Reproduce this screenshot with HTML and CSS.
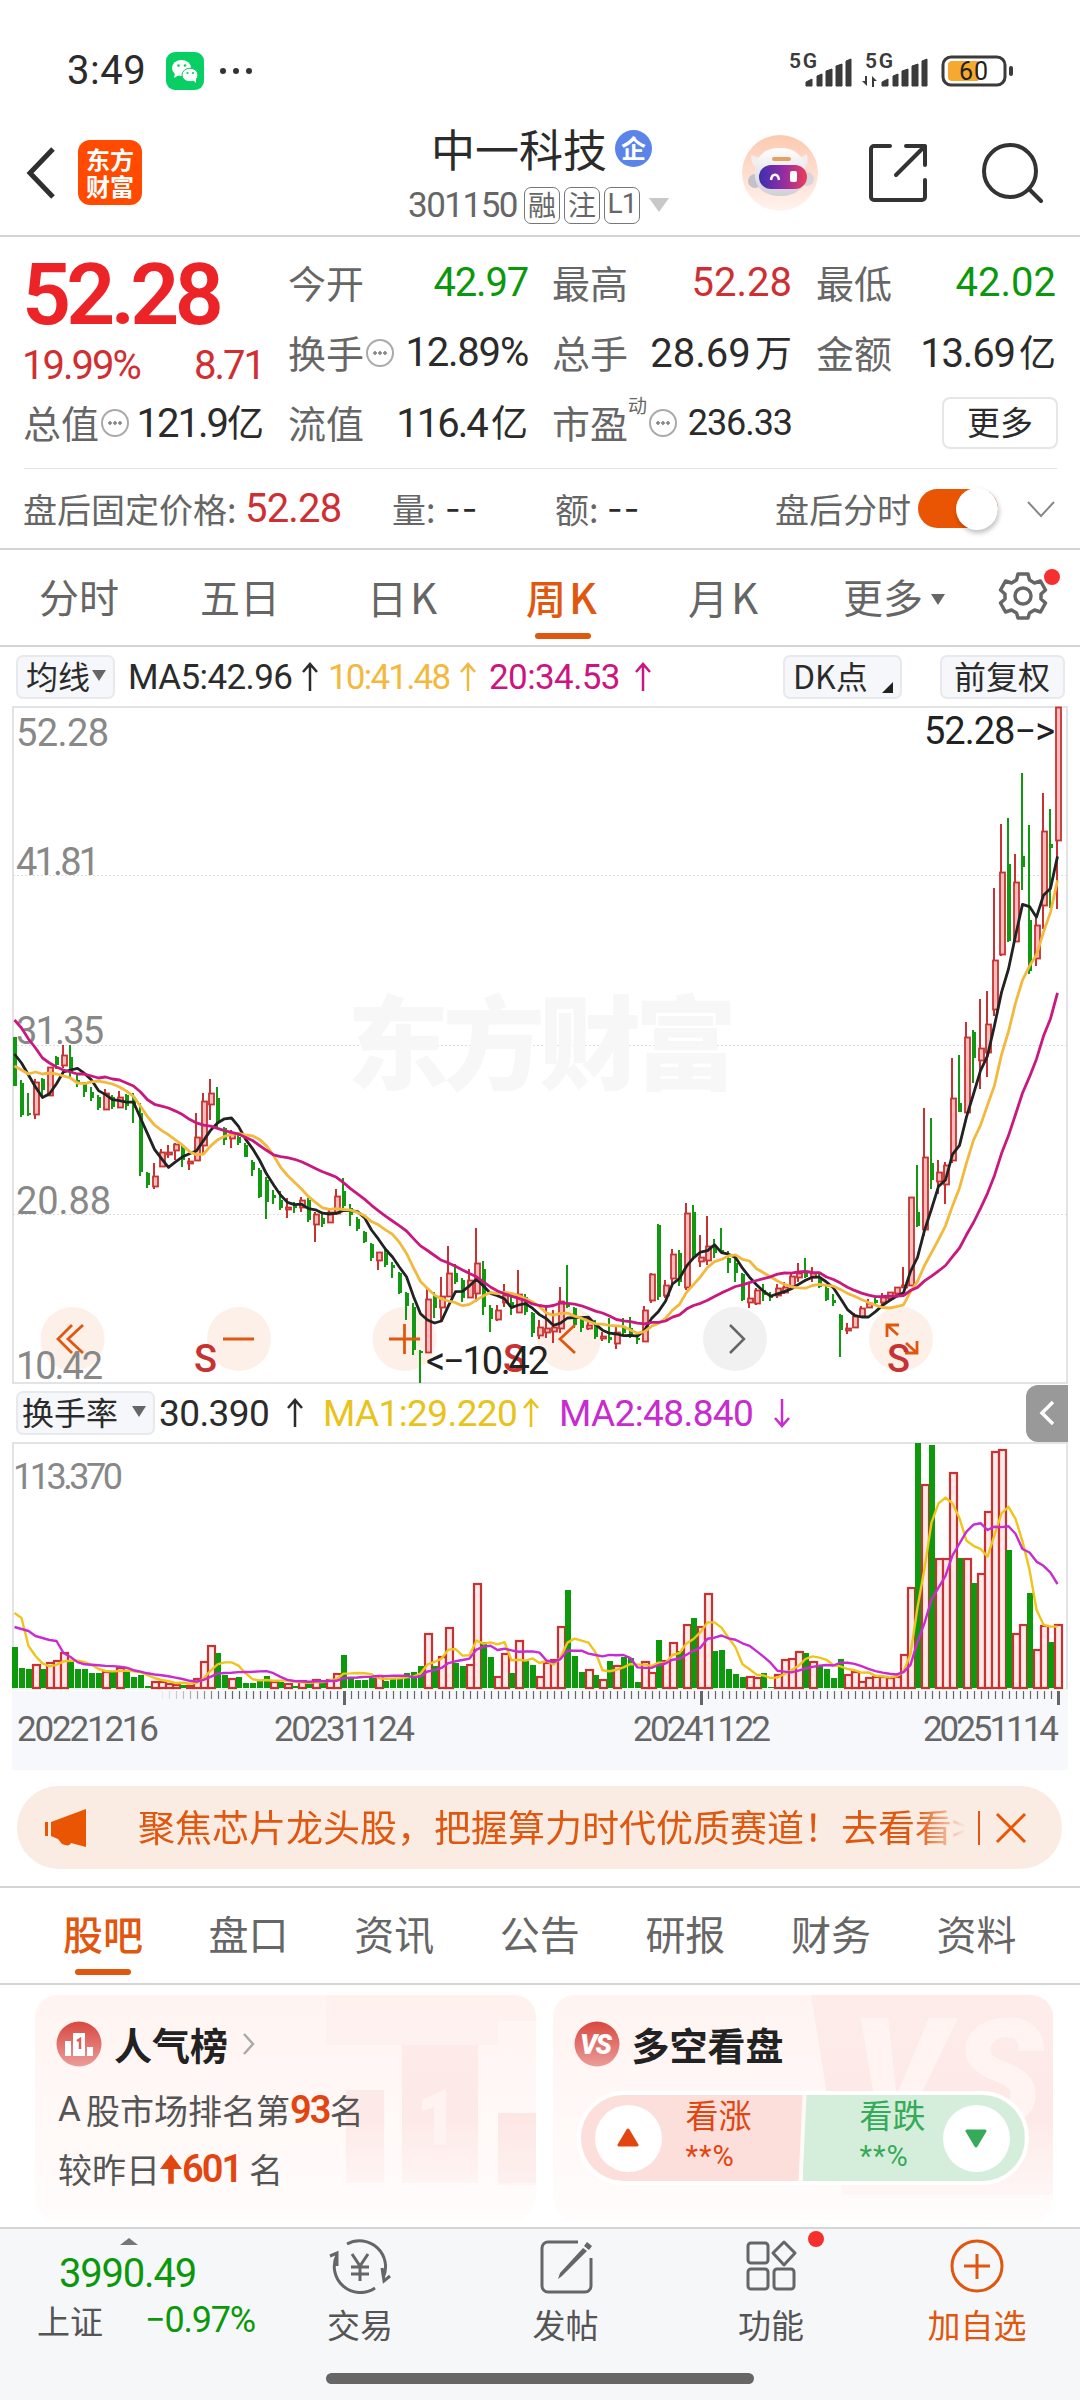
FILE: index.html
```html
<!DOCTYPE html>
<html lang="zh-CN">
<head>
    <meta charset="UTF-8">
    <meta name="viewport" content="width=device-width, initial-scale=1.0">
    <title>中一科技 301150</title>
    <link rel="stylesheet" href="styles.css">
</head>
<body>
    <div class="status-bar">
        <span class="time">3:49</span>
        <svg class="wechat" width="38" height="38" viewBox="0 0 38 38">
            <rect width="38" height="38" rx="9" fill="#07cf63"/>
            <ellipse cx="15.5" cy="16" rx="9.5" ry="8" fill="#fff"/>
            <path d="M9 21l-1 5 5-3z" fill="#fff"/>
            <ellipse cx="24" cy="23" rx="8" ry="6.8" fill="#fff" stroke="#07cf63"/>
            <path d="M27 28l3 3v-5z" fill="#fff"/>
            <g fill="#07cf63"><circle cx="12.5" cy="13.5" r="1.3"/><circle cx="19" cy="13.5" r="1.3"/><circle cx="21.5" cy="21" r="1.1"/><circle cx="27" cy="21" r="1.1"/></g>
        </svg>
        <svg class="dots" width="34" height="8" viewBox="0 0 34 8" fill="#333"><circle cx="4" cy="4" r="3"/><circle cx="17" cy="4" r="3"/><circle cx="30" cy="4" r="3"/></svg>
        <svg class="signals" width="224" height="42" viewBox="0 -4 224 42">
            <g fill="#3b3b3b" font-family="Roboto, sans-serif" font-size="21" font-weight="600">
                <text x="0" y="14" textLength="28">5G</text>
                <text x="76" y="14" textLength="28">5G</text>
                <path id="bars" d="M17 32v-4l6-3v7zM28 32V22l5-2v12zM37 32V17l6-2v17zM47 32V12l6-2v22zM57 32V7l5-2v27z" stroke="#3b3b3b" stroke-width="1" stroke-linejoin="round"/>
                <use href="#bars" x="76"/>
                <path d="M78 22v10l-5-5h3v-5zM83 33V22l5 5h-3v6z"/>
            </g>
            <rect x="154" y="3" width="62" height="28" rx="8" fill="none" stroke="#3b3b3b" stroke-width="3"/>
            <path d="M163 7h26v20h-26a4 4 0 0 1-4-4V11a4 4 0 0 1 4-4z" fill="#f6a92f"/>
            <rect x="220" y="12" width="4" height="10" rx="2" fill="#3b3b3b"/>
            <text x="170" y="26" font-family="Roboto, sans-serif" font-size="25" fill="#222" textLength="29">60</text>
        </svg>
    </div>

    <header class="header">
        <svg class="back" width="32" height="54" viewBox="0 0 32 54" fill="none" stroke="#2f2f2f" stroke-width="5"><path d="M28 3L5 27l23 24"/></svg>
        <div class="logo"><span>东方</span><span>财富</span></div>
        <div class="stock">
            <div class="stock-name">中一科技<span class="ent">企</span></div>
            <div class="stock-code"><span class="num">301150</span><i>融</i><i>注</i><i class="num">L1</i><b class="down"></b></div>
        </div>
        <svg class="robot" width="78" height="78" viewBox="0 0 78 78">
            <defs>
                <linearGradient id="halo" x1="0" y1="0" x2="0" y2="1"><stop offset="0" stop-color="#fdc9b0"/><stop offset="1" stop-color="#fff3ef"/></linearGradient>
                <linearGradient id="visor"><stop offset="0" stop-color="#3a2fb0"/><stop offset=".55" stop-color="#9a2da0"/><stop offset="1" stop-color="#ee3f55"/></linearGradient>
                <linearGradient id="shell" x1="0" y1="0" x2="0" y2="1"><stop offset="0" stop-color="#fff"/><stop offset="1" stop-color="#cfcfd6"/></linearGradient>
            </defs>
            <circle cx="39" cy="39" r="38" fill="url(#halo)"/>
            <circle cx="14" cy="47" r="7" fill="#c4c2c8"/><circle cx="66" cy="45" r="7" fill="#d8d6dc"/>
            <path d="M10 21l9 3-5 9c-3-3-4-7-4-12zM66 20l-8 4 7 8c2-3 2-7 1-12z" fill="#f1eef0"/>
            <path d="M39 14c15 0 23 7 26 22 2 16-9 26-26 26S12 52 14 36c2-15 10-22 25-22z" fill="url(#shell)"/>
            <rect x="31" y="23" width="19" height="4" rx="2" fill="#e5a064"/>
            <rect x="18" y="31" width="48" height="24" rx="12" fill="url(#visor)"/>
            <path d="M30 46c1-7 7-7 8 0" fill="none" stroke="#fff" stroke-width="2.5"/>
            <rect x="49" y="37" width="7" height="11" rx="2" fill="#fff"/>
        </svg>
        <svg class="share" width="60" height="60" viewBox="0 0 60 60" fill="none" stroke="#333" stroke-width="4" stroke-linecap="round" stroke-linejoin="round"><path d="M22 3H6a3 3 0 0 0-3 3v48a3 3 0 0 0 3 3h48a3 3 0 0 0 3-3V37M38 3h19v19M57 3L28 32"/></svg>
        <svg class="search" width="62" height="62" viewBox="0 0 62 62" fill="none" stroke="#333" stroke-width="4" stroke-linecap="round"><circle cx="29" cy="29" r="26"/><path d="M48 47l12 12"/></svg>
    </header>

    <section class="quote">
        <div class="quote-left">
            <div class="price">52.28</div>
            <div class="change num"><span>19.99%</span><span>8.71</span></div>
            <div class="cell"><span>总值</span><b class="tip"></b><em><span class="num tight">121.9</span>亿</em></div>
        </div>
        <div class="quote-grid">
            <div class="cell"><span>今开</span><em class="num green">42.97</em></div>
            <div class="cell"><span>最高</span><em class="num red wide">52.28</em></div>
            <div class="cell"><span>最低</span><em class="num green wide">42.02</em></div>
            <div class="cell"><span>换手</span><b class="tip"></b><em class="num">12.89%</em></div>
            <div class="cell"><span>总手</span><em><span class="num wide">28.69</span> 万</em></div>
            <div class="cell"><span>金额</span><em><span class="num">13.69</span> 亿</em></div>
            <div class="cell"><span>流值</span><em><span class="num tight">116.4</span> 亿</em></div>
            <div class="cell"><span>市盈</span><sup>动</sup><b class="tip"></b><em class="num pe">236.33</em></div>
            <div class="cell"><div class="more-btn">更多</div></div>
        </div>
    </section>

    <section class="after-hours">
        <span>盘后固定价格:</span><span class="num red after-price">52.28</span>
        <span>量:</span><span class="dash">--</span>
        <span>额:</span><span class="dash">--</span>
        <span>盘后分时</span>
        <div class="toggle"></div>
        <svg width="28" height="18" viewBox="0 0 28 18" fill="none" stroke="#888" stroke-width="2"><path d="M1 2l13 14L27 2"/></svg>
    </section>

    <nav class="period-tabs">
        <span>分时</span><span>五日</span><span>日<b>K</b></span><span class="active">周<b>K</b></span><span>月<b>K</b></span><span>更多<b class="down small"></b></span>
        <div class="gear">
            <svg width="50" height="50" viewBox="0 0 50 50" fill="none" stroke="#666" stroke-width="3.5" stroke-linejoin="round"><path d="M20 3h10l1.500 6 5 3 6-2 5 9-4.500 4v5l4.500 4-5 9-6-2-5 3-1.500 5H20l-1.500-5-5-3-6 2-5-9L7 28v-5l-4.500-4 5-9 6 2 5-3z"/><circle cx="25" cy="25" r="8"/></svg>
            <i class="red-dot"></i>
        </div>
    </nav>

    <section class="ma-row">
        <div class="chip">均线<b class="down small"></b></div>
        <span class="num">MA5:42.96</span><svg class="arrow"><use href="#up"/></svg>
        <span class="num orange">10:41.48</span><svg class="arrow orange"><use href="#up"/></svg>
        <span class="num magenta">20:34.53</span><svg class="arrow magenta"><use href="#up"/></svg>
        <div class="chip dk">DK点<b class="corner"></b></div>
        <div class="chip">前复权</div>
    </section>

    <svg class="k-chart" width="1056" height="678" viewBox="0 0 1056 678">
        <defs>
            <symbol id="up" viewBox="0 0 18 30"><path d="M9 29V2M2 10l7-8 7 8" fill="none" stroke="currentColor" stroke-width="2.5"/></symbol>
            <symbol id="down" viewBox="0 0 18 30"><path d="M9 1v27M2 20l7 8 7-8" fill="none" stroke="currentColor" stroke-width="2.5"/></symbol>
        </defs>
        <path d="M1 677V1h1054v676z" fill="none" stroke="#e1e3e4" stroke-width="2"/>
        <path d="M1 169.5h1054M1 339.500h1054M1 508.500h1054" stroke="#ddd" stroke-width="1" stroke-dasharray="2 2"/>
        <text class="watermark" x="335" y="376" textLength="390">东方财富</text>
        <g fill="#fdf0e9"><circle cx="60.5" cy="633" r="32"/><circle cx="227" cy="633" r="32"/><circle cx="392.5" cy="633" r="32"/><circle cx="557" cy="633" r="32"/><circle cx="889" cy="633" r="32"/></g>
        <circle cx="723" cy="633" r="32" fill="#f1f1f1"/>
        <g class="axis">
            <text x="4" y="40" textLength="93">52.28</text>
            <text x="4" y="169" textLength="84">41.81</text>
            <text x="4" y="338" textLength="88">31.35</text>
            <text x="4" y="508" textLength="95">20.88</text>
            <text x="4" y="673" textLength="87">10.42</text>
        </g>
        <g id="candles"></g>
        <g fill="none" stroke="#e0570f" stroke-width="2.8">
            <path d="M60 619l-14 14 14 14M71 619l-15 14 15 14"/>
            <path d="M211 633h31M377 633h31M392.500 618v30"/>
            <path d="M563 619l-15 14 15 14"/>
            <path d="M887 619h-12v12M875 619l11 10M893 647h12v-12M905 647l-11-10"/>
        </g>
        <path d="M718 619l14 14-14 14" fill="none" stroke="#666" stroke-width="2.5"/>
        <g class="sell"><text x="182" y="666">S</text><text x="491" y="666">S</text><text x="875" y="666">S</text></g>
        <text class="mark" x="912" y="38" textLength="131">52.28−&gt;</text>
        <text class="mark" x="414" y="668" textLength="123">&lt;−10.42</text>
    </svg>

    <section class="vol-row">
        <div class="chip">换手率<b class="down small"></b></div>
        <span class="num">30.390</span><svg class="arrow"><use href="#up"/></svg>
        <span class="num yellow">MA1:29.220</span><svg class="arrow yellow"><use href="#up"/></svg>
        <span class="num purple">MA2:48.840</span><svg class="arrow purple"><use href="#down"/></svg>
        <div class="drawer"><svg width="16" height="26" viewBox="0 0 16 26" fill="none" stroke="#fff" stroke-width="3.5"><path d="M14 2L3 13l11 11"/></svg></div>
    </section>

    <svg class="vol-chart" width="1056" height="328" viewBox="0 0 1056 328">
        <rect y="249" width="1056" height="79" fill="#f7f8fb"/>
        <path d="M1 247V1h1054v246" fill="none" stroke="#e1e3e4" stroke-width="2"/>
        <path d="M0 247h1056" stroke="#d5f0da" stroke-width="1"/>
        <g class="axis small-axis"><text x="1" y="47" textLength="110">113.370</text></g>
        <g id="volumes"></g>
        <g id="ticks"></g>
        <g class="dates">
            <text x="5" y="299" textLength="142">20221216</text>
            <text x="262" y="299" textLength="141">20231124</text>
            <text x="621" y="299" textLength="138">20241122</text>
            <text x="911" y="299" textLength="136">20251114</text>
        </g>
    </svg>

    <div class="banner">
        <svg width="44" height="38" viewBox="0 0 44 38" fill="#ea5504"><path d="M1 13h3v14H1zM7 13L42 0v38l-15-4c-2 4-5 2-9 1l-4-5-7-3z"/></svg>
        <p>聚焦芯片龙头股，把握算力时代优质赛道！去看看&gt;</p>
        <i></i>
        <svg width="32" height="32" viewBox="0 0 32 32" stroke="#ea5504" stroke-width="3"><path d="M2 2l28 28M30 2L2 30"/></svg>
    </div>

    <nav class="info-tabs">
        <span class="active">股吧</span><span>盘口</span><span>资讯</span><span>公告</span><span>研报</span><span>财务</span><span>资料</span>
    </nav>

    <section class="cards">
        <div class="card">
            <svg class="card-bg" width="260" height="225" viewBox="0 0 260 225">
                <defs><linearGradient id="fade" gradientUnits="userSpaceOnUse" x1="0" y1="0" x2="0" y2="200"><stop offset="0" stop-color="#fbdedb" stop-opacity=".35"/><stop offset=".6" stop-color="#fbdcda" stop-opacity=".55"/><stop offset="1" stop-color="#fbe3e1" stop-opacity=".2"/></linearGradient></defs>
                <path d="M50 0h210v190h-38v-72h38V26H222v24H50z" fill="#fdeae7" opacity=".35"/>
                <path d="M70 95h38v93H70zM126 50h76v138h-76zM222 118h38v70h-38z" fill="url(#fade)"/>
                <path d="M146 105l24-11v56h-12v-38l-12 4z" fill="#fff3f1"/>
            </svg>
            <h3><svg width="46" height="46" viewBox="0 0 46 46"><defs><linearGradient id="badge" x1="0" y1="0" x2="0" y2="1"><stop offset="0" stop-color="#d94741"/><stop offset="1" stop-color="#eb9d99"/></linearGradient></defs><circle cx="23" cy="23" r="22.5" fill="url(#badge)"/><path d="M9 20h6v15H9zM17 12h12v23H17zM31 26h6v9h-6z" fill="#fff"/><path d="M21 20l3-2v10" fill="none" stroke="#d85f5a" stroke-width="2.5"/></svg>人气榜<svg class="more" width="14" height="24" viewBox="0 0 14 24" fill="none" stroke="#aaa" stroke-width="2.5"><path d="M2 2l9 10-9 10"/></svg></h3>
            <p><span class="num">A </span>股市场排名第<b class="num">93</b>名</p>
            <p>较昨日<svg width="22" height="32" viewBox="0 0 24 32" fill="#e2450f"><path d="M12 0l12 16h-9v16H9V16H0z"/></svg><b class="num">601</b> 名</p>
        </div>
        <div class="card">
            <svg class="card-bg" width="260" height="225" viewBox="0 0 260 225">
                <path d="M18 0h242v200H50z" fill="url(#fade)"/>
                <text x="58" y="130" class="vs" textLength="192">VS</text>
            </svg>
            <h3><svg width="46" height="46" viewBox="0 0 46 46"><circle cx="23" cy="23" r="22.5" fill="url(#badge)"/><text x="6" y="33" class="vs-icon" textLength="32">VS</text></svg>多空看盘</h3>
            <div class="vote">
                <div class="rise"><i><svg width="24" height="20" viewBox="0 0 24 20"><path d="M12 2l9 15H3z" fill="#e2450f" stroke="#e2450f" stroke-width="3" stroke-linejoin="round"/></svg></i><span>看涨<small>**%</small></span></div>
                <div class="fall"><span>看跌<small>**%</small></span><i><svg width="24" height="20" viewBox="0 0 24 20"><path d="M12 18L3 3h18z" fill="#35ab59" stroke="#35ab59" stroke-width="3" stroke-linejoin="round"/></svg></i></div>
            </div>
        </div>
    </section>

    <footer class="bottom-nav">
        <div class="index">
            <b class="up"></b>
            <div class="num green">3990.49</div>
            <div class="index-row"><span>上证</span><span class="num green">−0.97%</span></div>
        </div>
        <div class="nav-item">
            <svg width="62" height="56" viewBox="0 0 62 56" fill="none" stroke="#666" stroke-width="3"><path d="M18 6a26 26 0 0 1 36 34M46 50A26 26 0 0 1 8 17M1 18l7-3v13M61 38l-6 5-2-13M23 16l8 12 8-12M31 28v15M22 29h18M22 36h18"/></svg>
            <span>交易</span>
        </div>
        <div class="nav-item">
            <svg width="54" height="56" viewBox="0 0 54 56" fill="none" stroke="#666" stroke-width="3"><path d="M39 4H9a6 6 0 0 0-6 6v38a6 6 0 0 0 6 6h37a6 6 0 0 0 6-6V20"/><path d="M44 10l4 3-25 25-4 3 2-6zM48 4l5 4-3 4-5-4z" fill="#666" stroke="none"/></svg>
            <span>发帖</span>
        </div>
        <div class="nav-item">
            <svg width="52" height="52" viewBox="0 0 52 52" fill="none" stroke="#666" stroke-width="3"><rect x="3" y="3" width="20" height="20" rx="3"/><path d="M39 2l11 11-11 12-11-12z" stroke-linejoin="round"/><rect x="3" y="29" width="20" height="20" rx="3"/><rect x="29" y="29" width="20" height="20" rx="3"/></svg>
            <span>功能</span>
            <i class="red-dot"></i>
        </div>
        <div class="nav-item add">
            <svg width="56" height="56" viewBox="0 0 56 56" fill="none" stroke="#e0570f" stroke-width="3"><circle cx="28" cy="28" r="25"/><path d="M28 16v25M15 28h26"/></svg>
            <span>加自选</span>
        </div>
        <div class="home-bar"></div>
    </footer>

    <script src="chart.js"></script>
</body>
</html>
```
FILE: styles.css
```css
:root {
    --orange: #e0570f;
    --red: #cf2f33;
    --green: #0c980c;
    --text: #2b2b2b;
    --gray: #666;
    --line: #d5d5d5;
}

* {
    box-sizing: border-box;
}

body {
    width: 1080px;
    height: 2400px;
    margin: 0;
    overflow: hidden;
    background: #fff;
    color: var(--text);
    font-family: "Noto Sans CJK SC", sans-serif;
    font-size: 38px;
    line-height: 1;
}

i, em {
    font-style: normal;
}

svg {
    flex: none;
}

.num {
    font-family: Roboto, "Noto Sans CJK SC", sans-serif;
    letter-spacing: -0.03em;
}

.num.wide { letter-spacing: 0; }
.num.tight { letter-spacing: -0.05em; }

.green { color: var(--green) !important; }
.red { color: var(--red) !important; }
.orange { color: #f3b93e; }
.magenta { color: #cc1580; }
.yellow { color: #e8c31c; }
.purple { color: #c82bd0; }

.down {
    display: inline-block;
    border: 10px solid transparent;
    border-top: 14px solid #c8c8c8;
    border-bottom: 0;
}

.down.small {
    border-width: 11px 7px 0;
    border-top-color: var(--gray);
}

.red-dot {
    position: absolute;
    width: 16px;
    height: 16px;
    border-radius: 50%;
    background: #f5302e;
}

/* 状态栏 */
.status-bar {
    display: flex;
    align-items: center;
    height: 105px;
    padding: 36px 67px 0 67px;
}

.time {
    width: 99px;
    font-family: Roboto, sans-serif;
    font-size: 40px;
    letter-spacing: 0.5px;
}

.dots {
    margin-left: 15px;
}

.signals {
    margin-left: auto;
}

/* 标题栏 */
.header {
    display: flex;
    align-items: center;
    height: 132px;
    padding: 5px 37px 0 25px;
    border-bottom: 2px solid var(--line);
}

.logo {
    display: flex;
    flex-direction: column;
    justify-content: center;
    width: 64px;
    height: 65px;
    margin-left: 21px;
    padding-bottom: 2px;
    border-radius: 12px;
    background: #ff4a00;
    color: #fff;
    font-size: 24px;
    font-weight: 700;
    line-height: 27px;
    text-align: center;
}

.stock {
    width: 262px;
    margin-left: 266px;
    padding-top: 12px;
}

.stock-name {
    display: flex;
    align-items: center;
    padding-left: 23px;
    height: 50px;
    font-size: 44px;
}

.ent {
    width: 37px;
    height: 37px;
    margin: 2px 0 0 8px;
    border-radius: 50%;
    background: #5b84e8;
    color: #fff;
    font-size: 25px;
    font-weight: 700;
    line-height: 35px;
    text-align: center;
}

.stock-code {
    display: flex;
    align-items: center;
    height: 62px;
    padding-top: 3px;
    color: var(--gray);
    font-size: 35px;
}

.stock-code .num:first-child {
    width: 116px;
    letter-spacing: -1.5px;
}

.stock-code i {
    width: 36px;
    height: 37px;
    margin-right: 4px;
    border: 1.5px solid #777;
    border-radius: 7px;
    font-size: 28px;
    line-height: 32px;
    text-align: center;
}

.stock-code .down {
    margin-left: 5px;
}

.robot {
    margin-left: 71px;
}

.share {
    margin-left: 49px;
}

.search {
    margin-left: auto;
}

/* 行情 */
.quote {
    display: flex;
    gap: 25px;
    height: 232px;
    margin: 0 23px 0 24px;
    padding-top: 11px;
    border-bottom: 1px solid #e4e4e4;
}

.quote-left {
    width: 240px;
}

.price {
    height: 93px;
    margin-left: -2px;
    color: #ec2427;
    font-family: Roboto, sans-serif;
    font-size: 86px;
    font-weight: 600;
    line-height: 93px;
    letter-spacing: -4.8px;
}

.change {
    display: flex;
    justify-content: space-between;
    align-items: center;
    height: 49px;
    margin: 0 0 -2px -2px;
    color: var(--red);
    font-size: 40px;
    letter-spacing: -2px;
}

.quote-grid {
    display: grid;
    grid-template-columns: repeat(3, 239px);
    grid-auto-rows: 70px;
    column-gap: 25px;
}

.cell {
    display: flex;
    align-items: center;
    height: 70px;
    color: var(--gray);
    white-space: nowrap;
}

.cell > span {
    margin: -2px 0 0 -1px;
}

.cell em {
    margin-left: auto;
    color: var(--text);
    font-size: 37px;
    word-spacing: -4px;
}

.cell em.num,
.cell em .num {
    font-size: 40px;
}

.cell em.pe {
    font-size: 36px;
}

.cell sup {
    align-self: flex-start;
    margin-top: 7px;
    font-size: 19px;
    line-height: 20px;
}

.tip {
    width: 28px;
    height: 28px;
    margin-left: 2px;
    border: 2px solid #aaa;
    border-radius: 50%;
    background: radial-gradient(circle, #888 1.5px, transparent 2px) center / 6px 6px no-repeat,
        radial-gradient(circle, #888 1.5px, transparent 2px) 4px center / 6px 6px no-repeat,
        radial-gradient(circle, #888 1.5px, transparent 2px) 14px center / 6px 6px no-repeat;
}

.more-btn {
    width: 116px;
    height: 52px;
    margin: 0 -2px 0 auto;
    border: 2px solid #e6e6e6;
    border-radius: 8px;
    color: var(--text);
    font-size: 33px;
    line-height: 45px;
    text-align: center;
}

.after-hours {
    display: grid;
    grid-template-columns: 222px 147px 53px 110px 52px 168px 143px 109px 28px;
    align-items: center;
    height: 81px;
    padding-left: 23px;
    border-bottom: 2px solid var(--line);
    color: var(--gray);
    font-size: 34px;
    white-space: nowrap;
}

.after-price {
    font-size: 40px;
    letter-spacing: -0.02em;
}

.dash {
    color: var(--text);
    font-family: Inter, sans-serif;
    letter-spacing: 1px;
}

.toggle {
    width: 80px;
    height: 39px;
    border-radius: 20px;
    background: #ea5504;
}

.toggle::after {
    content: "";
    display: block;
    width: 42px;
    height: 42px;
    margin: -1px 0 0 38px;
    border-radius: 50%;
    background: #fff;
    box-shadow: 1px 3px 5px rgba(0, 0, 0, 0.25);
}

/* 周期切换 */
.period-tabs {
    display: grid;
    grid-template-columns: 161px 167px 159px 162px 155px 155px 50px;
    align-items: center;
    height: 97px;
    padding: 0 0 3px 39px;
    border-bottom: 2px solid var(--line);
    color: var(--gray);
    font-size: 40px;
}

.period-tabs b:not(.down) {
    margin-left: 3px;
    font-size: 42px;
    font-weight: inherit;
}

.period-tabs .active,
.info-tabs .active {
    position: relative;
    color: var(--orange);
}

.period-tabs .active {
    font-weight: 500;
}

.active::after {
    content: "";
    position: absolute;
    bottom: -22px;
    left: 9px;
    width: 56px;
    height: 6px;
    border-radius: 3px;
    background: var(--orange);
}

.period-tabs .small {
    margin: 0 0 8px 8px;
}

.gear {
    position: relative;
    height: 50px;
}

.gear .red-dot {
    right: -12px;
    top: -2px;
}

.ma-row,
.vol-row {
    display: grid;
    align-items: center;
    height: 60px;
    font-size: 35px;
    white-space: nowrap;
}

.ma-row {
    grid-template-columns: 112px 173px 27px 131px 30px 145px 149px 157px 125px;
    padding-left: 16px;
}

.ma-row .num {
    letter-spacing: -0.6px;
}

.ma-row .orange.num {
    letter-spacing: -1.8px;
}

.chip {
    display: flex;
    align-items: center;
    justify-content: space-between;
    justify-self: start;
    height: 44px;
    padding: 0 7px 4px 8px;
    border: 2px solid #e8e9ec;
    border-radius: 7px;
    background: #f6f7fa;
    font-size: 32px;
}

.ma-row .chip:first-child {
    width: 99px;
}

.dk {
    width: 119px;
}

.corner {
    align-self: flex-end;
    border-left: 11px solid transparent;
    border-bottom: 11px solid #222;
}

.chip:last-child {
    width: 125px;
    padding-left: 12px;
}

.arrow {
    width: 18px;
    height: 30px;
}

/* 图表 */
.k-chart,
.vol-chart {
    display: block;
    margin-left: 12px;
}

.k-chart {
    margin-top: -1px;
}

.axis {
    fill: #888;
    font-family: Roboto, sans-serif;
    font-size: 38px;
}

.small-axis {
    font-size: 36px;
}

.watermark {
    fill: #f7f7f7;
    font-size: 102px;
    font-weight: 800;
}

.mark {
    fill: #222;
    font-family: Roboto, sans-serif;
    font-size: 38px;
}

.sell {
    fill: #c83232;
    font-family: Roboto, sans-serif;
    font-size: 38px;
    font-weight: 500;
}

.dates {
    fill: #666;
    font-family: Roboto, sans-serif;
    font-size: 35px;
}

.vol-row {
    grid-template-columns: 143px 127px 37px 199px 37px 214px 253px 42px;
    height: 58px;
    padding-left: 16px;
}

.vol-row .num {
    font-size: 37px;
    letter-spacing: -0.6px;
}

.vol-row .chip {
    width: 139px;
    padding-left: 4px;
}

.drawer {
    display: flex;
    align-items: center;
    justify-content: center;
    height: 57px;
    border-radius: 12px 0 0 12px;
    background: #999;
}

/* 公告条 */
.banner {
    display: flex;
    align-items: center;
    width: 1045px;
    height: 83px;
    margin: 16px 0 17px 17px;
    padding: 0 35px 0 27px;
    border-radius: 42px;
    background: #fbece3;
    color: var(--orange);
    font-size: 37px;
}

.banner p {
    width: 828px;
    margin: 0 0 3px 50px;
    overflow: hidden;
    line-height: 50px;
    white-space: nowrap;
    -webkit-mask-image: linear-gradient(90deg, #000 94%, transparent);
    mask-image: linear-gradient(90deg, #000 94%, transparent);
}

.banner i {
    width: 2px;
    height: 34px;
    margin: 0 15px 0 auto;
    background: var(--orange);
}

.info-tabs {
    display: grid;
    grid-template-columns: repeat(7, 145.6px);
    align-items: center;
    height: 99px;
    padding: 0 0 5px 63px;
    border-top: 2px solid var(--line);
    border-bottom: 2px solid var(--line);
    color: var(--gray);
    font-size: 40px;
}

.info-tabs .active {
    font-weight: 500;
}

.info-tabs .active::after {
    bottom: -22px;
    left: 12px;
}

/* 卡片 */
.cards {
    display: flex;
    gap: 17px;
    height: 242px;
    padding: 10px 27px 0 35px;
}

.card {
    position: relative;
    flex: 1;
    height: 225px;
    padding: 26px 23px;
    border-radius: 22px;
    background: linear-gradient(#fff4f2, #fffcfb);
    color: #555;
    font-size: 34px;
    overflow: hidden;
}

.card-bg {
    position: absolute;
    right: 0;
    top: 0;
}

.vs {
    fill: #fff4f2;
    font-family: Roboto, sans-serif;
    font-size: 150px;
    font-weight: 900;
    font-style: italic;
}

.vs-icon {
    fill: #fff;
    font-family: Roboto, sans-serif;
    font-size: 27px;
    font-weight: 900;
    font-style: italic;
}

.card h3 {
    position: relative;
    display: flex;
    align-items: center;
    height: 46px;
    margin: 0;
    color: #222;
    font-size: 38px;
    font-weight: 600;
}

.card h3 svg:first-child {
    margin: 0 12px 0 -2px;
}

.card .more {
    margin-left: 14px;
}

.card p {
    position: relative;
    display: flex;
    align-items: center;
    height: 59px;
    margin: 13px 0 -13px;
    white-space: pre;
}

.card p .num {
    font-size: 35px;
    letter-spacing: -0.05em;
}

.card p b {
    color: #e2450f;
    font-size: 38px !important;
    font-weight: 600;
}

.vote {
    position: relative;
    display: flex;
    width: 452px;
    height: 94px;
    margin: 24px 0 0 1px;
    border: 4px solid #fff;
    border-radius: 47px;
    overflow: hidden;
}

.rise,
.fall {
    display: flex;
    align-items: center;
    width: 225px;
}

.rise {
    padding-left: 14px;
    background: #fcdeda;
    color: #e2450f;
    clip-path: polygon(0 0, 100% 0, calc(100% - 4px) 100%, 0 100%);
}

.fall {
    justify-content: flex-end;
    padding-right: 15px;
    background: #d5eedb;
    color: #35ab59;
    clip-path: polygon(4px 0, 100% 0, 100% 100%, 0 100%);
}

.vote i {
    display: flex;
    align-items: center;
    justify-content: center;
    width: 67px;
    height: 67px;
    border-radius: 50%;
    background: #fff;
}

.vote span {
    margin: -7px 24px 0 24px;
    font-size: 33px;
}

.fall span {
    margin-right: 17px;
}

.vote small {
    display: block;
    margin-top: 10px;
    font-family: Roboto, sans-serif;
    font-size: 29px;
    line-height: 30px;
    letter-spacing: 1px;
}

/* 底部导航 */
.bottom-nav {
    position: relative;
    display: grid;
    grid-template-columns: 257px 206px 205px 206px 206px;
    height: 174px;
    border-top: 2px solid var(--line);
    background: #f6f7f9;
    color: #555;
    font-size: 33px;
}

.index {
    position: relative;
    padding: 24px 0 0 37px;
    white-space: nowrap;
}

.index > .num {
    padding-left: 22px;
    font-size: 40px;
    line-height: 42px;
}

.index-row {
    display: flex;
    align-items: center;
    gap: 42px;
    height: 50px;
}

.index-row .num {
    font-size: 36px;
    letter-spacing: -1.2px;
}

.up {
    position: absolute;
    left: 120px;
    top: 9px;
    border: 9px solid transparent;
    border-top: 0;
    border-bottom: 7px solid #777;
}

.nav-item {
    position: relative;
    display: flex;
    flex-direction: column;
    align-items: center;
    padding-top: 9px;
}

.nav-item svg {
    height: 56px;
}

.nav-item span {
    margin-top: 14px;
}

.nav-item .red-dot {
    left: 140px;
    top: 2px;
}

.add {
    color: var(--orange);
}

.home-bar {
    position: absolute;
    left: 326px;
    bottom: 17px;
    width: 428px;
    height: 11px;
    border-radius: 6px;
    background: #666;
}
```
FILE: chart.js
```js
const STEP = 7;

// 颜色, 最高, 实体上沿, 实体下沿, 最低
const candles = `
g331,331,380,380 g374,377,409,411 g387,407,409,410 r373,376,408,413 g372,373,384,391
r361,361,389,389 g350,351,359,363 r339,349,359,362 g339,351,367,371 g369,374,376,381
g376,377,386,391 g381,386,392,395 g389,391,402,404 r383,387,403,404 g389,391,401,403
r385,391,401,402 g388,389,400,404 g387,391,402,417 g397,407,466,470 g466,467,479,482
r457,470,480,483 r443,446,460,461 r439,446,447,452 r437,438,444,454 g439,442,454,461
r452,455,457,464 r407,431,454,455 r387,395,439,447 r373,387,398,414 g381,392,417,421
g421,422,434,439 r424,427,432,442 g426,431,437,439 g437,439,451,451 g454,456,464,470
g462,464,491,492 g471,474,496,513 g484,489,492,498 g485,494,502,504 r492,501,503,512
g496,499,502,507 r491,494,501,506 g492,494,514,516 r506,508,518,536 g507,512,518,521
r504,506,516,517 r483,490,507,509 g472,485,500,502 g498,502,509,520 g511,513,523,525
g525,526,536,537 g537,538,552,555 r546,546,554,564 g541,547,559,561 g556,559,562,572
g566,567,587,588 g586,587,600,614 g597,601,644,649 g644,645,646,677 r583,593,646,647
g586,591,602,612 r571,590,601,614 r540,567,590,591 g558,567,576,578 g572,574,592,596
r563,574,591,592 r522,557,587,596 g555,563,601,609 g599,602,613,626 r599,604,613,615
r578,589,596,601 g591,596,601,609 r564,588,606,607 g588,591,606,609 g606,607,627,631
r614,621,629,633 r599,622,626,632 r604,621,625,637 r581,595,622,627 g559,597,601,602
g601,602,619,622 g612,614,622,626 r611,619,622,624 g614,619,631,633 r626,630,632,635
g612,631,634,637 r621,626,637,643 g612,621,627,630 g611,622,630,632 g627,632,634,638
r600,604,635,636 r567,568,594,597 g518,519,591,594 r574,579,589,592 r543,548,572,579
g544,547,576,580 r497,507,581,584 g499,506,549,554 r529,551,555,561 r510,540,554,559
g533,541,547,552 g522,544,546,547 g545,552,557,567 g552,557,567,576 g567,568,594,595
r577,592,596,602 r582,584,597,599 g578,584,589,595 g586,589,592,595 r578,582,589,592
r576,581,586,588 r567,570,580,582 r557,567,571,576 g552,567,571,572 r561,567,571,576
g567,572,581,582 g579,582,594,595 g588,594,597,600 g608,609,624,651 r617,622,624,628
r607,610,621,622 r600,602,610,611 r593,597,601,602 g591,594,597,598 r587,591,596,601
r586,586,592,596 r581,581,587,589 r561,579,581,582 r491,491,579,580 g459,506,520,521
r402,451,523,530 g412,457,474,483 r454,466,475,488 r456,459,478,498 r352,392,454,457
g349,397,406,406 r316,331,406,406 g324,326,352,377 r293,342,354,383 r285,318,346,371
r182,254,303,310 r118,166,248,250 g112,158,235,236 r148,176,235,236 g67,150,161,184
g119,214,265,268 r212,219,252,260 r87,125,199,223 g103,138,142,202 r1,1,134,203
`.trim().split(/\s+/).map(s => [s[0], ...s.slice(1).split(',').map(Number)]);

// 换手率柱高，负数为绿柱
const volumes = [
    -41, -20, -19, 24, -19, 26, 28, 36, -27, -19, -19, -15, -15, 17, -17,
    21, -17, -11, -13, -2, 7, 7, 5, 4, -3, 3, 10, 27, 43, -35,
    -13, 10, -11, -5, -5, -7, -12, 7, -6, 5, -2, 8, -5, 9, -6,
    9, 15, -33, -10, -8, -8, -10, 13, -7, -9, -10, -15, -16, -22, 55,
    -22, 32, 61, -25, -22, 24, 105, -46, -31, 12, 35, -15, 48, -27, -23,
    12, 26, 29, 62, -98, -32, -16, 19, -13, 9, -27, 23, -31, -30, -6,
    27, 16, -48, 28, 46, -37, 64, -70, 62, 95, -37, -38, -19, -14, -11,
    12, 11, -15, -1, 14, 29, 30, 37, -35, 27, -23, -19, -10, -29, 14,
    17, 7, 11, 12, 12, 11, 12, 34, 101, -245, 204, -243, 130, 130, 216,
    -130, 130, -105, 115, 177, 237, 239, -138, 55, 64, -95, 39, 63, -46, 64
];

// 均线：前几个点数据不足，用 seed 补齐
function average(values, n, seed) {
    return values.map((v, i) => {
        if (i < seed.length) return seed[i];
        return values.slice(i - n + 1, i + 1).reduce((a, b) => a + b, 0) / n;
    });
}

function line(ys, color, width) {
    const points = ys.map((y, i) => `${2.5 + i * STEP},${y.toFixed(1)}`).join(' ');
    return `<polyline points="${points}" fill="none" stroke="${color}" stroke-width="${width}" stroke-linejoin="round"/>`;
}

// K线
let html = '';
candles.forEach(([c, high, top, bottom, low], i) => {
    const x = 2 + i * STEP;
    const h = Math.max(bottom - top, 2);
    if (c === 'g') {
        html += `<path d="M${x} ${high}V${low}" stroke="#119911" stroke-width="2"/>`;
        html += `<rect x="${x - 1}" y="${top}" width="4" height="${h}" fill="#119911"/>`;
    } else {
        html += `<path d="M${x} ${high}V${top}M${x} ${bottom}V${low}" stroke="#c83232" stroke-width="2"/>`;
        html += `<rect x="${x - 1}" y="${top + 0.5}" width="5" height="${h}" fill="#f7bcbc" stroke="#c83232" stroke-width="1.8"/>`;
    }
});
const closes = candles.map(c => c[0] === 'g' ? c[3] : c[2]);
html += line(average(closes, 5, [348, 357, 369, 381]), '#222', 2.8);
html += line(average(closes, 10, [360, 364, 368, 366, 368, 367, 368, 370, 372]), '#f3b93e', 2.8);
html += line(average(closes, 20, [314, 322, 333, 342, 352, 357, 361, 364, 366, 368, 368, 370, 372, 371, 373, 374, 377, 380, 386]), '#c9187e', 2.8);
document.getElementById('candles').innerHTML = html;

// 换手率
const BASE = 246;
html = '';
volumes.forEach((v, i) => {
    const x = i * STEP;
    const h = Math.abs(v);
    if (v < 0) {
        html += `<rect x="${x}" y="${BASE - h}" width="6" height="${h}" fill="#0c9a0c"/>`;
    } else {
        html += `<rect x="${x}" y="${BASE - h + 1}" width="7" height="${h - 1}" fill="#ffecea" stroke="#c83232" stroke-width="2.2"/>`;
    }
});
const heights = volumes.map(Math.abs);
html += line(average(heights, 5, [75, 70, 42, 32]).map(v => BASE - v), '#efc51c', 2.4);
html += line(average(heights, 10, [61, 59, 57, 52, 50, 48, 47, 35, 31]).map(v => BASE - v), '#c82bd0', 2.4);
document.getElementById('volumes').innerHTML = html;

// 时间刻度
html = '';
for (let i = 21; i < 150; i++) {
    const major = (149 - i) % 51 === 0;
    const x = 3.5 + i * STEP;
    html += `<path d="M${x} 249V${major ? 263 : 257}" stroke="#666" stroke-width="${major ? 3 : 1.2}" opacity="${Math.min(1, (i - 20) / 10)}"/>`;
}
document.getElementById('ticks').innerHTML = html;
```
